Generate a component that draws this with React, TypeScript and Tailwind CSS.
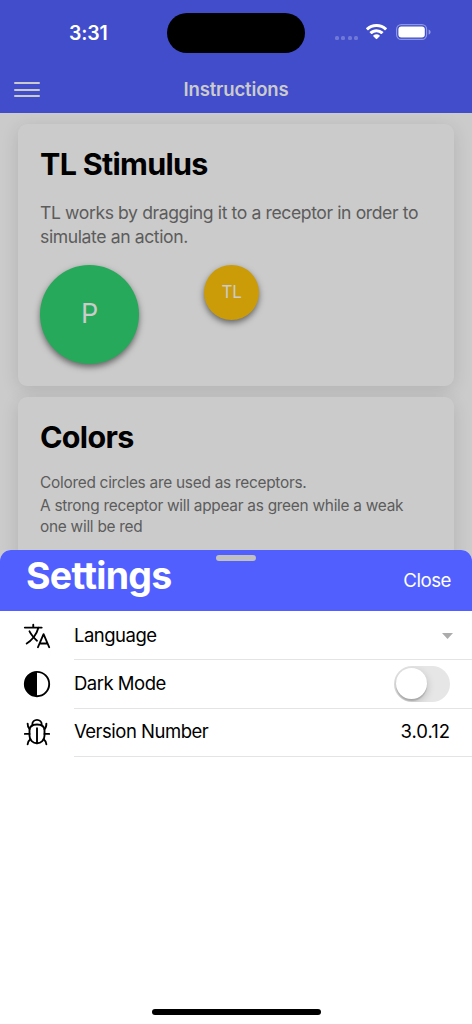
import { useState } from "react";
import type { ReactNode } from "react";
import { IoBugOutline, IoContrastOutline, IoLanguageOutline } from "react-icons/io5";

function StatusBar() {
  return (
    <div className="relative flex h-[66px] items-center justify-between pl-[69px] pr-[41px]">
      <span className="mt-px text-[19.5px] font-semibold leading-none tracking-[-0.2px] text-white">3:31</span>
      <div className="absolute left-[167px] top-[13px] h-10 w-[138px] rounded-full bg-black" />
      <div className="-mt-0.5 flex items-center">
        <div className="mr-2 mt-[11px] flex gap-[2.5px]">
          {[0, 1, 2, 3].map((dot) => (
            <span key={dot} className="size-1 rounded-[1.5px] bg-white/25" />
          ))}
        </div>
        <svg viewBox="0 0 21 16" className="mr-[9px] h-4 w-[21px]" aria-hidden="true">
          <path
            fill="#fff"
            d="M10.5 0C6.5 0 2.9 1.5.2 4.1a.5.5 0 0 0 0 .7l1.4 1.4c.2.2.5.2.7 0A11.8 11.8 0 0 1 10.5 3c3.2 0 6.1 1.2 8.2 3.2.2.2.5.2.7 0l1.4-1.4a.5.5 0 0 0 0-.7A14.9 14.9 0 0 0 10.5 0Zm0 5.2c-2.6 0-4.9 1-6.7 2.6a.5.5 0 0 0 0 .7l1.5 1.4c.2.2.5.2.7 0a6.6 6.6 0 0 1 9 0c.2.2.5.2.7 0l1.5-1.4a.5.5 0 0 0 0-.7 9.8 9.8 0 0 0-6.7-2.6Zm0 5.1c-1.2 0-2.3.4-3.2 1.2a.5.5 0 0 0 0 .7l2.8 2.9c.2.2.6.2.8 0l2.8-2.9a.5.5 0 0 0 0-.7 4.8 4.8 0 0 0-3.2-1.2Z"
          />
        </svg>
        <svg viewBox="0 0 35 16" className="h-4 w-[35px]" aria-hidden="true">
          <rect x="0.6" y="0.6" width="30" height="14.8" rx="4.6" fill="none" stroke="#fff" strokeOpacity="0.4" strokeWidth="1.2" />
          <rect x="2.4" y="2.6" width="26.4" height="10.8" rx="3" fill="#fff" />
          <path d="M32.6 5.4c1.3.5 2 1.5 2 2.6s-.7 2.1-2 2.6Z" fill="#fff" fillOpacity="0.45" />
        </svg>
      </div>
    </div>
  );
}

function Header() {
  return (
    <header className="h-[113px] bg-[#414dcb]">
      <StatusBar />
      <div className="relative flex h-[47px] items-center justify-center">
        <button type="button" aria-label="Menu" className="absolute left-[14px] top-4 flex w-[26px] flex-col gap-[4.5px]">
          <span className="h-0.5 rounded-full bg-[#cbcbcb]" />
          <span className="h-0.5 rounded-full bg-[#cbcbcb]" />
          <span className="h-0.5 rounded-full bg-[#cbcbcb]" />
        </button>
        <h1 className="text-[18.5px] font-semibold leading-none tracking-[-0.15px] text-[#cbcbcb]">Instructions</h1>
      </div>
    </header>
  );
}

function Card({ title, className, children }: { title: string; className: string; children: ReactNode }) {
  return (
    <section className={`shrink-0 rounded-[9px] bg-[#cbcbcb] px-[22px] shadow-[0_4px_18px_rgba(0,0,0,0.12)] ${className}`}>
      <h2 className="whitespace-nowrap text-[30.5px] font-bold leading-[37px] tracking-[-0.7px] text-black">{title}</h2>
      {children}
    </section>
  );
}

function Row({ icon, label, children }: { icon: ReactNode; label: string; children: ReactNode }) {
  return (
    <div className="flex h-[48.3px] pl-[22px] text-[18.5px] text-black">
      <div className="flex w-[52px] items-center pb-px text-[30px]">{icon}</div>
      <div className="flex flex-1 items-center justify-between border-b border-[#e4e4e4] pr-[22px]">
        <span className="tracking-[-0.5px]">{label}</span>
        {children}
      </div>
    </div>
  );
}

function SettingsSheet() {
  const [dark, setDark] = useState(false);

  return (
    <div className="absolute inset-x-0 bottom-0 top-[550px] overflow-hidden rounded-t-[11px] bg-white">
      <div className="relative flex h-[61px] items-center justify-between bg-[#515fff] pl-[26px] pr-[21px] text-white">
        <div className="absolute left-[216px] top-[5px] h-1.5 w-10 rounded-full bg-[#c0c0c0]" />
        <h2 className="-mt-2.5 text-[37.5px] font-bold leading-none tracking-[-0.7px]">Settings</h2>
        <button type="button" className="mt-px text-[18.7px] leading-none tracking-[-0.5px]">
          Close
        </button>
      </div>
      <div className="pt-px">
        <Row icon={<IoLanguageOutline />} label="Language">
          <svg viewBox="0 0 11 6" className="-mr-[3px] h-1.5 w-[11px]" aria-hidden="true">
            <path d="M0 0h11L5.5 6Z" fill="#acacac" />
          </svg>
        </Row>
        <Row icon={<IoContrastOutline />} label="Dark Mode">
          <button
            type="button"
            role="switch"
            aria-checked={dark}
            aria-label="Dark Mode"
            onClick={() => setDark(!dark)}
            className={`flex h-9 w-14 items-center overflow-hidden rounded-full p-[2px] ${dark ? "justify-end bg-[#515fff]" : "bg-[#e6e6e6]"}`}
          >
            <span className="size-[31px] rounded-full bg-white shadow-[0_3px_8px_rgba(0,0,0,0.2),0_2px_1px_rgba(0,0,0,0.15)]" />
          </button>
        </Row>
        <Row icon={<IoBugOutline />} label="Version Number">
          <span>3.0.12</span>
        </Row>
      </div>
      <div className="absolute bottom-[9px] left-[152px] h-[6px] w-[169px] rounded-full bg-black" />
    </div>
  );
}

export default function App() {
  return (
    <div className="relative flex h-[1024px] w-[472px] flex-col overflow-hidden bg-[#cbcbcb] font-[Inter,'Liberation_Sans',sans-serif]">
      <Header />
      <main className="flex h-[437px] flex-col gap-[11px] overflow-hidden px-[18px] pt-[11px]">
        <Card title="TL Stimulus" className="h-[262px] pt-[21px]">
          <p className="mt-[19px] whitespace-nowrap text-[17.6px] leading-[24px] tracking-[-0.4px] text-[#5c5c5c]">
            TL works by dragging it to a receptor in order to
            <br />
            simulate an action.
          </p>
          <div className="mt-4 flex gap-[65px] text-[#cbcbcb]">
            <div className="flex size-[99px] items-center justify-center rounded-full bg-[#26a95a] pb-px text-[27px] shadow-[0_3px_6px_rgba(0,0,0,0.5)]">
              P
            </div>
            <div className="flex size-[55px] items-center justify-center rounded-full bg-[#cb9c08] text-[17px] tracking-[-0.3px] shadow-[0_3px_6px_rgba(0,0,0,0.5)]">
              TL
            </div>
          </div>
        </Card>
        <Card title="Colors" className="h-[262px] pt-[21px]">
          <div className="mt-[17px] flex flex-col gap-[2px] whitespace-nowrap text-[15.4px] leading-[21px] tracking-[-0.26px] text-[#5c5c5c]">
            <p>Colored circles are used as receptors.</p>
            <p>
              A strong receptor will appear as green while a weak
              <br />
              one will be red
            </p>
          </div>
        </Card>
      </main>
      <SettingsSheet />
    </div>
  );
}
